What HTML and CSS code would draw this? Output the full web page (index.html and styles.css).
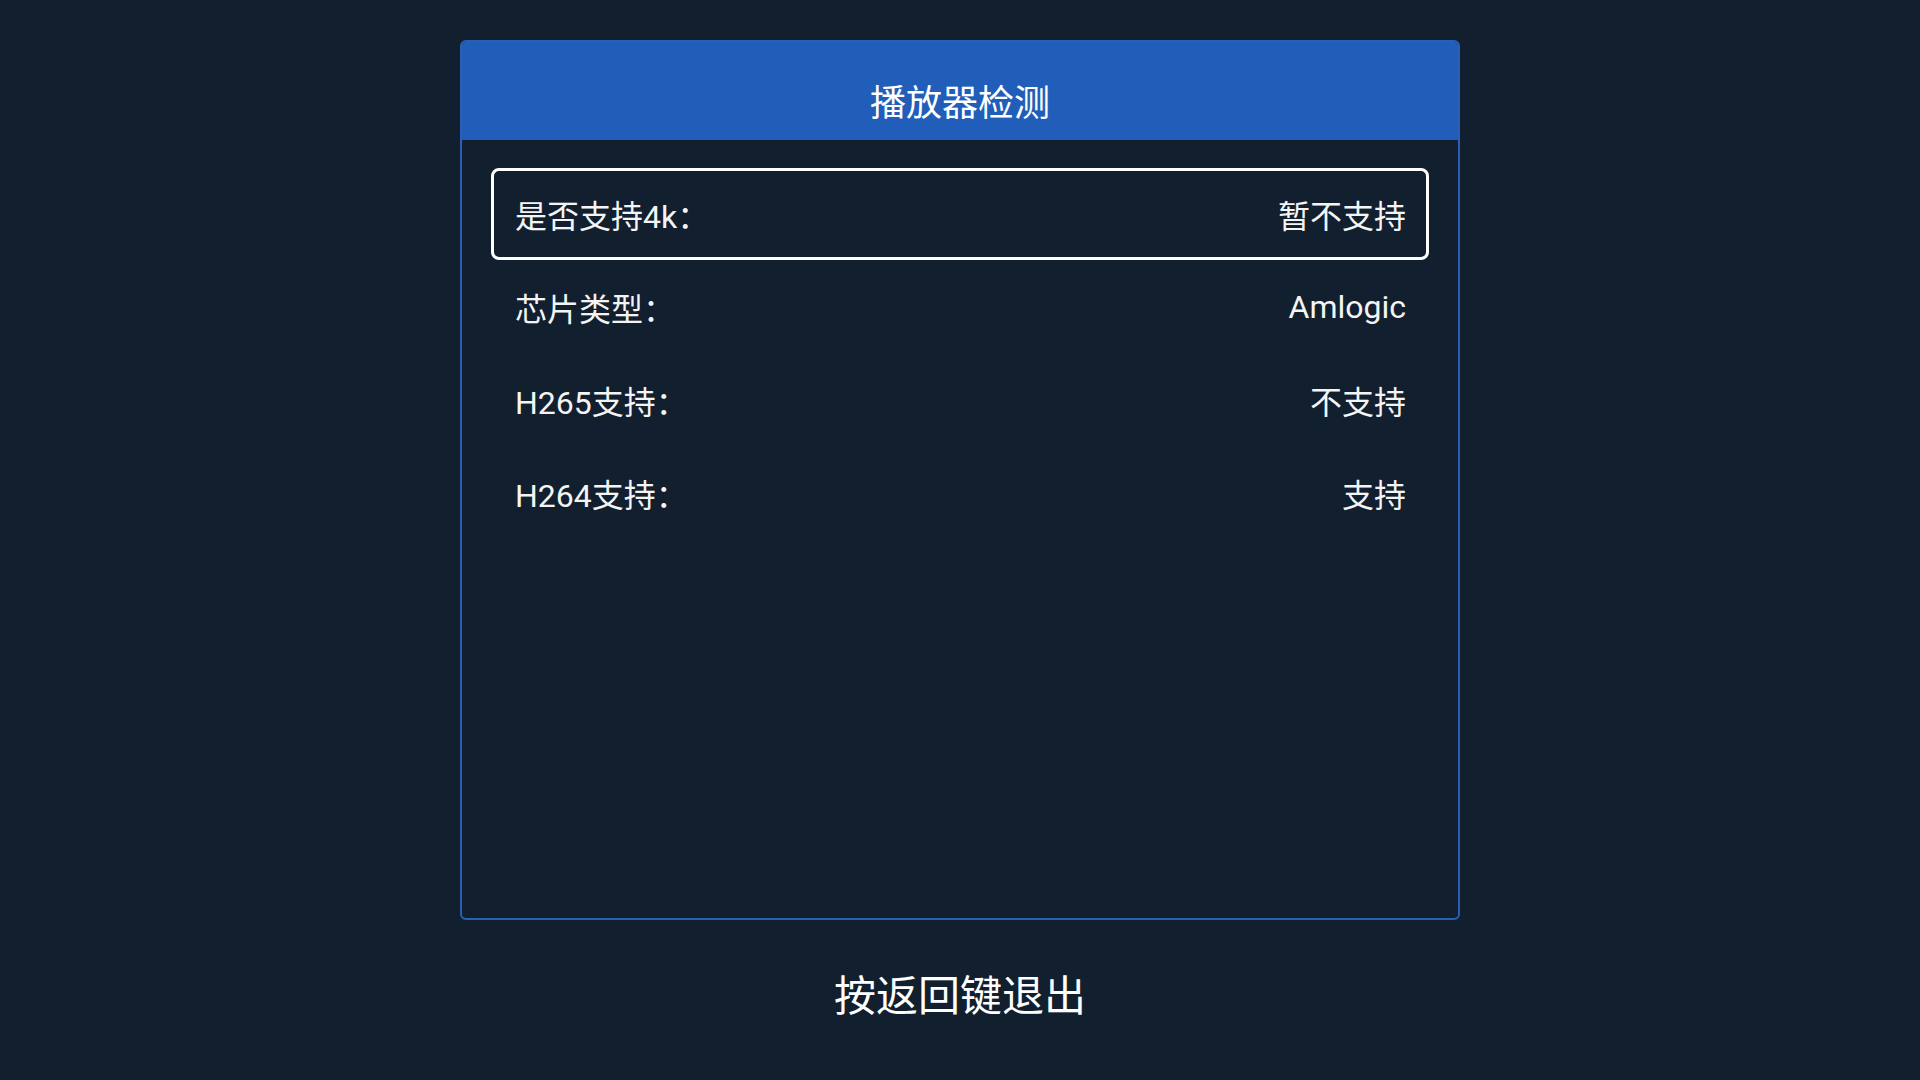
FILE: index.html
```html
<!DOCTYPE html>
<html lang="zh-CN">
<head>
<meta charset="utf-8">
<title>播放器检测</title>
<link rel="stylesheet" href="styles.css">
</head>
<body>
<div class="screen">
  <section class="panel">
    <header class="panel-header">播放器检测</header>
    <div class="rows">
      <div class="row focused"><span class="label">是否支持4k：</span><span class="value">暂不支持</span></div>
      <div class="row"><span class="label">芯片类型：</span><span class="value">Amlogic</span></div>
      <div class="row"><span class="label">H265支持：</span><span class="value">不支持</span></div>
      <div class="row"><span class="label">H264支持：</span><span class="value">支持</span></div>
    </div>
  </section>
  <div class="hint">按返回键退出</div>
</div>
</body>
</html>
```
FILE: styles.css
```css
html, body {
  margin: 0;
  padding: 0;
  background: #111f2f;
}
body {
  font-family: Roboto, "Noto Sans CJK SC", sans-serif;
  color: #ffffff;
}
.screen {
  width: 1920px;
  height: 1080px;
  display: flex;
  flex-direction: column;
  align-items: center;
  padding-top: 40px;
  box-sizing: border-box;
}
.panel {
  width: 1000px;
  height: 880px;
  box-sizing: border-box;
  border: 2px solid #2a5fb6;
  border-radius: 6px;
  overflow: hidden;
  display: flex;
  flex-direction: column;
}
.panel-header {
  height: 100px;
  box-sizing: border-box;
  padding-top: 20px;
  background: #215eb9;
  display: flex;
  align-items: center;
  justify-content: center;
  font-size: 36px;
  color: #ffffff;
  margin-top: -2px;
}
.rows {
  padding: 28px 29px 0;
  display: flex;
  flex-direction: column;
}
.row {
  height: 93px;
  box-sizing: border-box;
  border: 3px solid transparent;
  border-radius: 8px;
  display: flex;
  align-items: center;
  justify-content: space-between;
  padding: 0 20px 0 21px;
  font-size: 32px;
  color: #f4f4f4;
}
.row.focused {
  border-color: #ffffff;
  height: 92px;
}
.hint {
  margin-top: 47px;
  font-size: 42px;
  line-height: 60px;
  color: #ffffff;
}
```
